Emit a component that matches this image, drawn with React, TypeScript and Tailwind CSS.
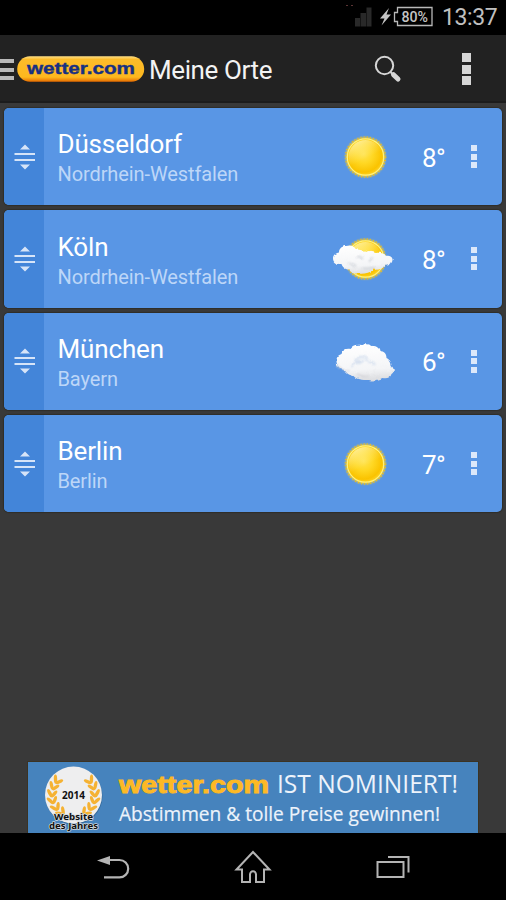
type Weather = "sunny" | "partly" | "cloudy";

const places: { name: string; region: string; temp: string; weather: Weather }[] = [
    { name: "Düsseldorf", region: "Nordrhein-Westfalen", temp: "8°", weather: "sunny" },
    { name: "Köln", region: "Nordrhein-Westfalen", temp: "8°", weather: "partly" },
    { name: "München", region: "Bayern", temp: "6°", weather: "cloudy" },
    { name: "Berlin", region: "Berlin", temp: "7°", weather: "sunny" },
];

// gradients and filters shared by all weather icons
function IconDefs() {
    return (
        <svg width="0" height="0" className="absolute" aria-hidden="true">
            <defs>
                <radialGradient id="sunFill" cx="0.45" cy="0.42" r="0.62">
                    <stop offset="0" stopColor="#ffe352" />
                    <stop offset="0.4" stopColor="#ffd824" />
                    <stop offset="0.8" stopColor="#fac300" />
                    <stop offset="1" stopColor="#ffd52e" />
                </radialGradient>
                <linearGradient id="sunShine" x1="0.1" y1="0" x2="0.6" y2="1">
                    <stop offset="0" stopColor="#fffcd0" stopOpacity="0.85" />
                    <stop offset="0.45" stopColor="#fff3a0" stopOpacity="0.2" />
                    <stop offset="0.6" stopColor="#fff3a0" stopOpacity="0" />
                </linearGradient>
                <linearGradient id="cloudFill" x1="0.4" y1="0" x2="0.5" y2="1">
                    <stop offset="0" stopColor="#ffffff" />
                    <stop offset="0.7" stopColor="#f4f5f7" />
                    <stop offset="1" stopColor="#dcdde0" />
                </linearGradient>
                <filter id="glow" x="-30%" y="-30%" width="160%" height="160%">
                    <feGaussianBlur stdDeviation="1.2" />
                </filter>
                <filter id="fluff" x="-10%" y="-10%" width="120%" height="120%">
                    <feTurbulence type="fractalNoise" baseFrequency="0.2" numOctaves="2" seed="4" />
                    <feDisplacementMap in="SourceGraphic" scale="3" xChannelSelector="R" yChannelSelector="G" />
                    <feGaussianBlur stdDeviation="0.4" />
                </filter>
                <filter id="soft" x="-20%" y="-20%" width="140%" height="140%">
                    <feGaussianBlur stdDeviation="0.9" />
                </filter>
            </defs>
        </svg>
    );
}

function Sun() {
    return (
        <g>
            <circle cx="32.5" cy="32" r="19.8" fill="#f2cf3c" filter="url(#glow)" />
            <circle cx="32.5" cy="32" r="19.6" fill="none" stroke="#e9bd20" strokeWidth="2.4" strokeDasharray="1 2.1" />
            <circle cx="32.5" cy="32" r="18.2" fill="url(#sunFill)" stroke="#fff27c" strokeWidth="1.2" />
            <circle cx="32.5" cy="32" r="17" fill="url(#sunShine)" />
        </g>
    );
}

function SmallCloud() {
    return (
        <g filter="url(#fluff)">
            <path
                d="M0 31c0-3 3-5 6-5.500 0-4 3-6.500 7-6.500 5-1.500 8 0 10 3.500 5 0 7 1 9 3.500 3-3 8-3 11 0 4-1 8 0 9 3 4-1 8 1 7.500 4-.5 4-4 6.500-8 5.500-2 4-7 5-11 4-4 4-11 5-16 4-4 0-7-1-8-4-4 0-7-2-8-5.500-6 0-8.500-2-8.500-6z"
                fill="url(#cloudFill)"
            />
            <g fill="none" stroke="#ccd0d7" strokeWidth="1.500" filter="url(#soft)">
                <path d="M24 30c3-1 4 0 6 2M40 31c-2 0-4 2-3 4M15 36c4 3 6 2 8 4M30 41c4 2 9-1 12 0" />
            </g>
        </g>
    );
}

function BigCloud() {
    return (
        <g filter="url(#fluff)">
            <path
                d="M3.500 32c0-4 2-6 5-7 1-4 5-6 9-5 3-4 7-5 11-4 4-1 8-1 11 1 4 0 7 2 7 5 5 0 7 3 7 7 4 2 5 5 5 8 3 3 3 6 0 8-1 4-5 5-9 4-4 2-9 3-14 2-6 0-12 0-15-4-5-1-7-3-9-6-5-1-8-5-8-9z"
                fill="url(#cloudFill)"
            />
            <g fill="none" filter="url(#soft)">
                <path d="M24 29c4-2 9-1 11 2M35 33c3-1 6 1 7 3M28 34c-5-1-9 1-10 4M22 30c2 2 6 3 9 2" stroke="#d3deee" strokeWidth="2" />
                <path d="M4 36c3 4 7 6 12 6M24 45c4 3 8 3 12 2" stroke="#cfcfd4" strokeWidth="1.200" />
            </g>
        </g>
    );
}

function WeatherIcon({ weather }: { weather: Weather }) {
    return (
        <svg width="64" height="64" viewBox="0 0 64 64">
            {weather !== "cloudy" && <Sun />}
            {weather === "partly" && <SmallCloud />}
            {weather === "cloudy" && <BigCloud />}
        </svg>
    );
}

function DragHandle() {
    return (
        <svg className="ml-[2px]" width="22" height="26" viewBox="0 0 22 26" fill="#d6e4f8">
            <path d="M11 .5 16 5.500H6zM11 25.500 6 20.500H16z" />
            <path d="M.5 9h20.500v2H.5zM.5 15h20.500v2H.5z" />
        </svg>
    );
}

function StatusBar() {
    return (
        <div className="flex h-[35px] items-center justify-end bg-black">
            <svg width="27" height="35" viewBox="0 0 27 35">
                <path d="M1 5.500h2M6 5.500h2" stroke="#5c3535" />
                <path d="M10 18h5v8.500h-5zM15.500 13h5.500v13.500h-5.500zM21.500 7.500h5v19h-5z" fill="#292929" />
            </svg>
            <svg className="ml-2" width="54" height="35" viewBox="0 0 54 35">
                <path d="M9 8 0 18.500h4.500L1.500 25.500 11 14.500H6.500z" fill="#c4c4c4" />
                <path d="M17.500 7.500h34.500v18h-34.500v-4h-3v-9h3z" fill="none" stroke="#b8b8b8" strokeWidth="1.300" />
                <text x="21.500" y="21.800" fill="#c4c4c4" fontFamily="Roboto, sans-serif" fontSize="14.500" fontWeight="500" textLength="26.500" lengthAdjust="spacingAndGlyphs">80%</text>
            </svg>
            <span className="mr-[10px] ml-[8px] w-[54px] text-[23px] leading-[35px] tracking-[-0.4px] whitespace-nowrap text-[#c0c0c0]">13:37</span>
        </div>
    );
}

function Header() {
    return (
        <header className="flex h-[68px] items-center border-b-2 border-[#1c1c1c] bg-[#222222]">
            <div className="mt-[3px] flex w-[14px] flex-col gap-[4.500px]">
                <div className="h-1 bg-[#b9b9b9]" />
                <div className="h-1 bg-[#b9b9b9]" />
                <div className="h-1 bg-[#b9b9b9]" />
            </div>
            <svg className="mt-[2px] ml-[2px]" width="130" height="28" viewBox="0 0 130 28">
                <defs>
                    <linearGradient id="pill" x1="0" y1="0" x2="0" y2="1">
                        <stop offset="0" stopColor="#ffe088" />
                        <stop offset="0.13" stopColor="#fdbc2a" />
                        <stop offset="0.82" stopColor="#fdb81e" />
                        <stop offset="1" stopColor="#e66b00" />
                    </linearGradient>
                </defs>
                <rect x="1.200" y="1.200" width="127" height="25.500" rx="12.700" fill="url(#pill)" />
                <text x="11" y="19" fill="#173082" stroke="#173082" strokeWidth="0.400" fontFamily="'Liberation Sans', sans-serif" fontWeight="700" fontSize="17" textLength="108" lengthAdjust="spacingAndGlyphs">wetter.com</text>
            </svg>
            <h1 className="mt-[4px] ml-[3px] text-[26px] tracking-[-0.4px] whitespace-nowrap text-[#f3f3f3]">Meine Orte</h1>
            <svg className="mt-[2px] ml-auto" width="30" height="30" viewBox="0 0 30 30">
                <circle cx="11.500" cy="11.500" r="8.700" fill="none" stroke="#d6d6d6" strokeWidth="2" />
                <path d="M17.500 18 20 20.500" stroke="#d6d6d6" strokeWidth="2" />
                <path d="m20.500 20.700 4.500 4.300" stroke="#d6d6d6" strokeWidth="5" strokeLinecap="round" />
            </svg>
            <div className="mt-[2px] mr-[35px] ml-[59px] flex flex-col gap-[2.500px]">
                <div className="size-[9px] bg-[#d6d6d6]" />
                <div className="size-[9px] bg-[#d6d6d6]" />
                <div className="size-[9px] bg-[#d6d6d6]" />
            </div>
        </header>
    );
}

function PlaceCard({ place }: { place: (typeof places)[number] }) {
    return (
        <li className="flex h-[97.300px] items-center overflow-hidden rounded-[5px] bg-[#5996e5] shadow-[0_0_1px_1px_#2f2e2a]">
            <div className="flex h-full w-[39.500px] items-center justify-center bg-[#4385d9]">
                <DragHandle />
            </div>
            <div className="mt-[3.500px] ml-[14px] flex-1 whitespace-nowrap">
                <div className="text-[26px] leading-[32px] tracking-[-0.150px] text-white">{place.name}</div>
                <div className="text-[20px] leading-[28px] tracking-[-0.100px] text-[#bdd6f8]">{place.region}</div>
            </div>
            <WeatherIcon weather={place.weather} />
            <div className="mt-[3px] ml-[25px] w-[49px] text-[26px] tracking-[-0.5px] text-white">{place.temp}</div>
            <div className="mr-[25px] flex flex-col gap-[2.500px]">
                <div className="size-[6px] bg-[#dce8fa]" />
                <div className="size-[6px] bg-[#dce8fa]" />
                <div className="size-[6px] bg-[#dce8fa]" />
            </div>
        </li>
    );
}

// leaf positions of the left half of the wreath, mirrored for the right half
const leaves = [
    { x: 30, y: 17, r: 30 },
    { x: 26, y: 23, r: 20 },
    { x: 24, y: 30, r: 5 },
    { x: 24, y: 37, r: -15 },
    { x: 27, y: 44, r: -30 },
    { x: 32, y: 49, r: -45 },
];

function Wreath() {
    return (
        <g fill="#f5b233">
            {leaves.map((leaf) => (
                <g key={leaf.y} transform={`translate(${leaf.x} ${leaf.y}) rotate(${leaf.r})`}>
                    <ellipse cx="-2.500" cy="0" rx="1.700" ry="4.500" transform="rotate(-32)" />
                    <ellipse cx="3" cy="0" rx="1.700" ry="4.200" transform="rotate(35)" />
                </g>
            ))}
        </g>
    );
}

function Banner() {
    return (
        <div className="mx-auto flex h-[71px] w-[450px] bg-[#4683bd] shadow-[0_0_0_1px_#3b3323]">
            <svg width="450" height="71" viewBox="0 0 450 71">
                <circle cx="46" cy="34" r="28.500" fill="#24517c" opacity="0.5" />
                <circle cx="45.500" cy="33" r="28.500" fill="#eeeeef" />
                <Wreath />
                <g transform="translate(91 0) scale(-1 1)">
                    <Wreath />
                </g>
                <g fontFamily="'Noto Sans', sans-serif" fontWeight="700" fill="#111">
                    <text x="34" y="37" fontSize="10.500" textLength="23" lengthAdjust="spacingAndGlyphs">2014</text>
                    <g stroke="#d5dade" strokeWidth="1.500" paintOrder="stroke" strokeLinejoin="round">
                        <text x="26" y="57.500" fontSize="9.500" textLength="39" lengthAdjust="spacingAndGlyphs">Website</text>
                        <text x="21" y="66.500" fontSize="9.500" textLength="49" lengthAdjust="spacingAndGlyphs">des Jahres</text>
                    </g>
                </g>
                <text x="91" y="31" fontFamily="'Liberation Sans', sans-serif" fontWeight="700" fontSize="23" fill="#fdb925" stroke="#fdb925" strokeWidth="0.900" textLength="150" lengthAdjust="spacingAndGlyphs">wetter.com</text>
                <g fontFamily="'Open Sans', sans-serif" fill="#edf3fb">
                    <text x="249" y="31" fontSize="25" textLength="181" lengthAdjust="spacingAndGlyphs">IST NOMINIERT!</text>
                    <text x="91" y="59" fontSize="19.500" stroke="#edf3fb" strokeWidth="0.200" textLength="321" lengthAdjust="spacingAndGlyphs">Abstimmen &amp; tolle Preise gewinnen!</text>
                </g>
            </svg>
        </div>
    );
}

function NavBar() {
    return (
        <nav className="flex h-[67px] items-center justify-between bg-black pr-[96px] pb-[3px] pl-[96px]">
            <svg width="34" height="34" viewBox="0 0 34 34" fill="none" stroke="#b4b4b4" strokeWidth="2.200">
                <path d="M13 12h10.500a8.700 8.700 0 0 1 0 17.400H8" />
                <path d="M1 12.500 14 8v9z" fill="#b4b4b4" stroke="none" />
            </svg>
            <svg width="38" height="38" viewBox="0 0 38 38" fill="none" stroke="#b4b4b4" strokeWidth="2">
                <path d="M19 6 2.500 23.500H8V36h8v-7.500a3 3.300 0 0 1 6 0V36h8V23.500h5.500z" />
            </svg>
            <svg width="34" height="34" viewBox="0 0 34 34" fill="none" stroke="#b4b4b4" strokeWidth="2">
                <path d="M1.500 14h26v15h-26z" />
                <path d="M12 9h20.500v15.500" />
            </svg>
        </nav>
    );
}

export default function App() {
    return (
        <div className="flex h-[900px] w-[506px] flex-col overflow-hidden bg-[#393939] font-[Roboto,sans-serif]">
            <IconDefs />
            <StatusBar />
            <Header />
            <main className="flex flex-1 flex-col justify-between px-1 pt-[5px]">
                <ul className="flex flex-col gap-[5px]">
                    {places.map((place) => (
                        <PlaceCard key={place.name} place={place} />
                    ))}
                </ul>
                <Banner />
            </main>
            <NavBar />
        </div>
    );
}
